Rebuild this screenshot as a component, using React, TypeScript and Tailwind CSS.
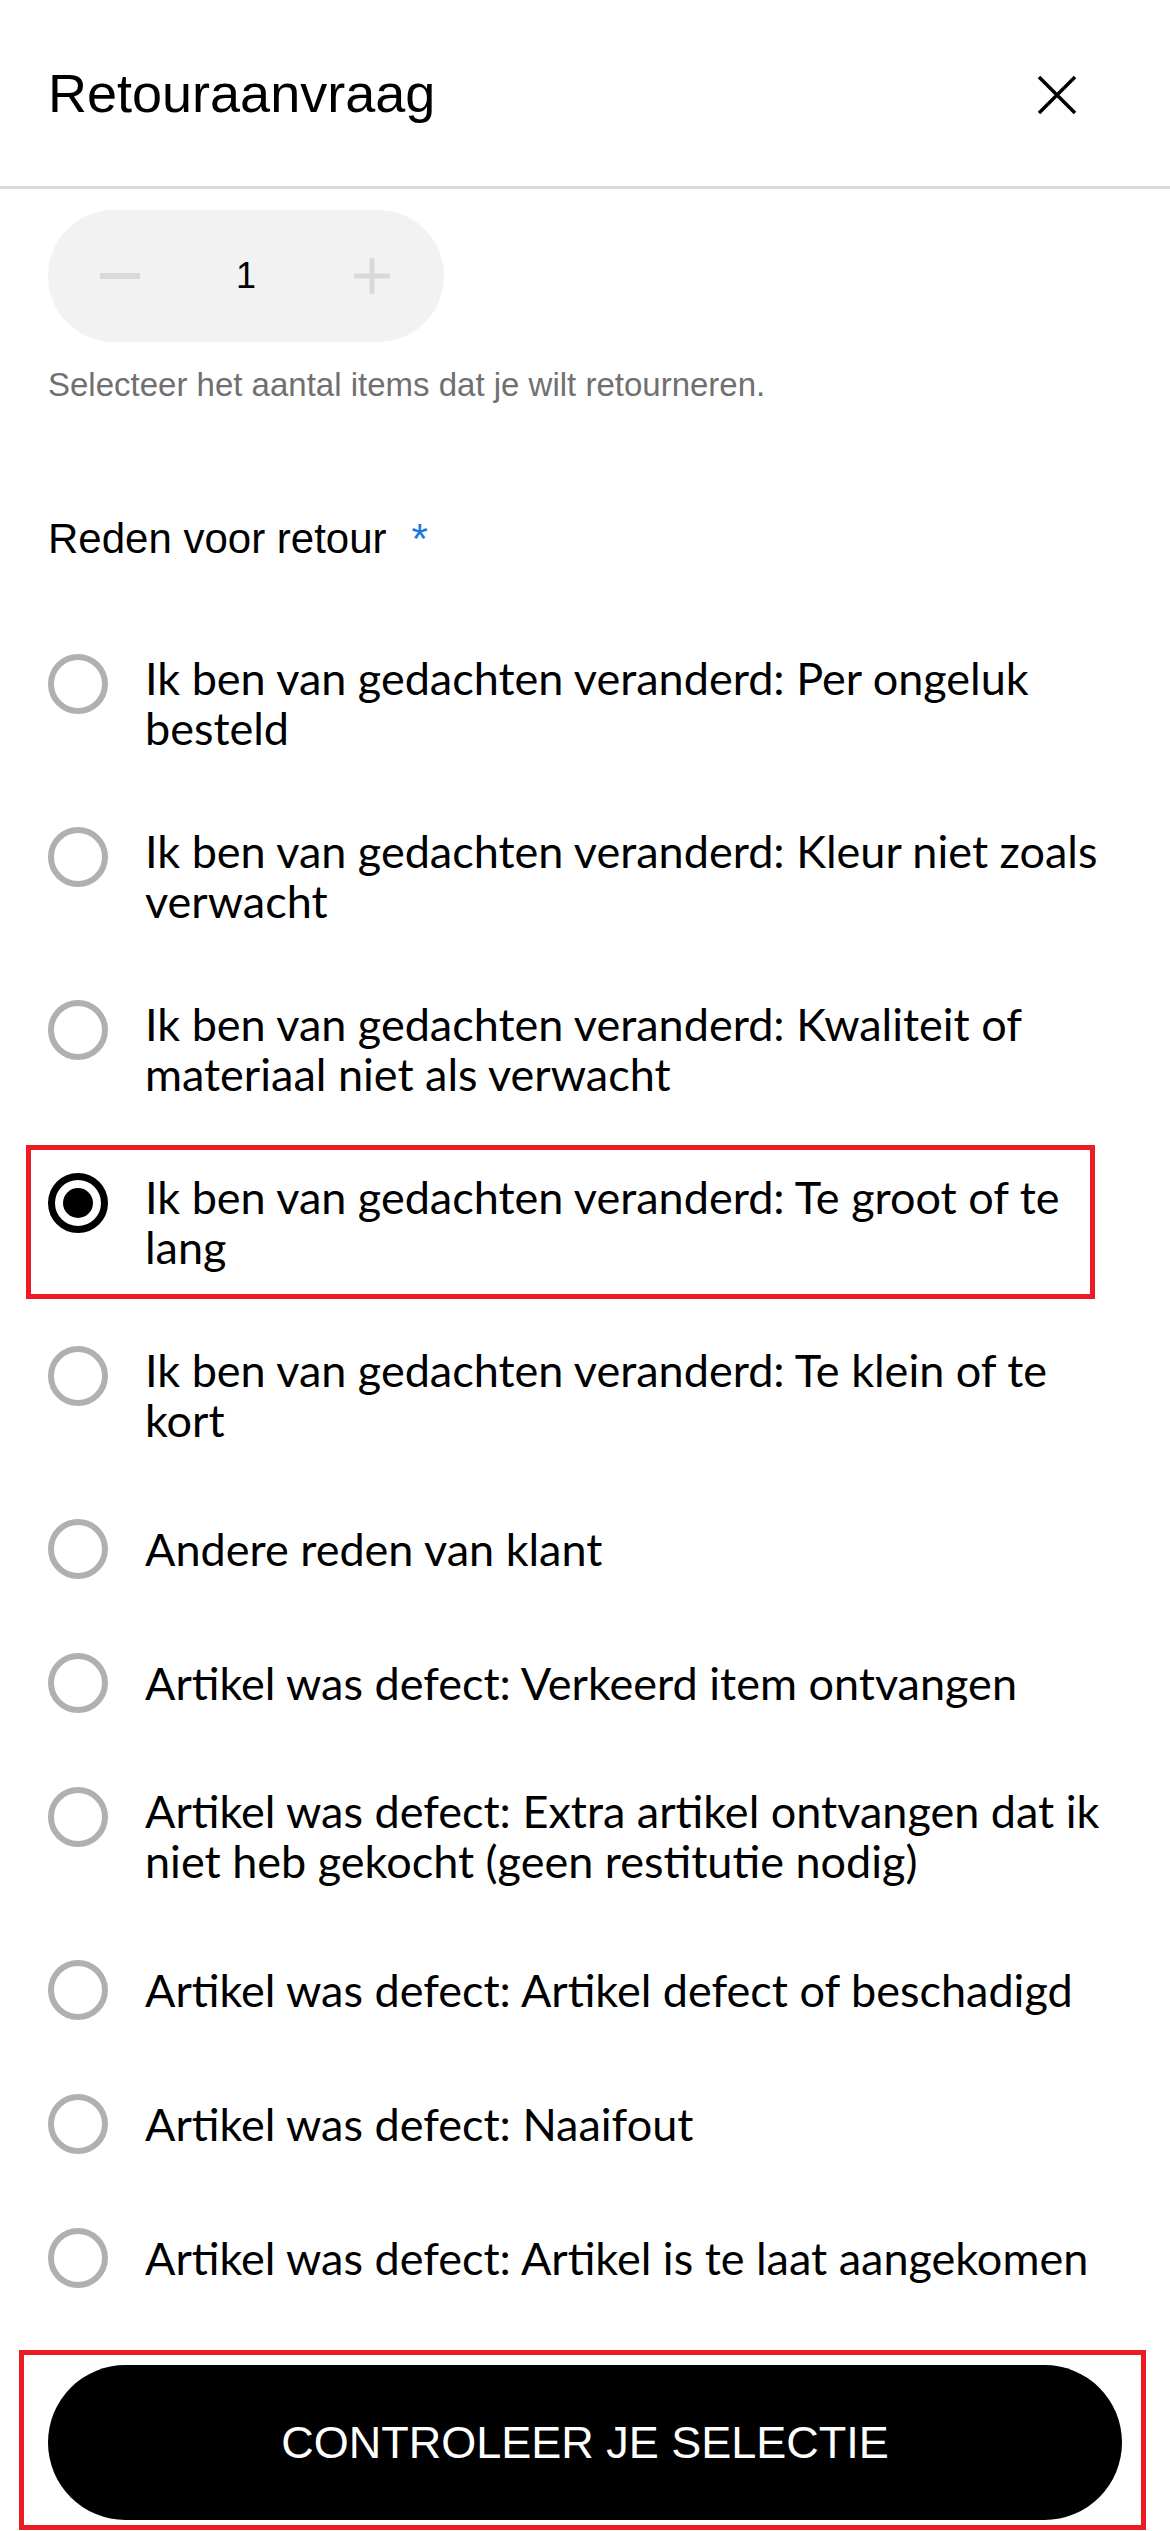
import React, { useState } from "react";

const reasons = [
  "Ik ben van gedachten veranderd: Per ongeluk besteld",
  "Ik ben van gedachten veranderd: Kleur niet zoals verwacht",
  "Ik ben van gedachten veranderd: Kwaliteit of materiaal niet als verwacht",
  "Ik ben van gedachten veranderd: Te groot of te lang",
  "Ik ben van gedachten veranderd: Te klein of te kort",
  "Andere reden van klant",
  "Artikel was defect: Verkeerd item ontvangen",
  "Artikel was defect: Extra artikel ontvangen dat ik niet heb gekocht (geen restitutie nodig)",
  "Artikel was defect: Artikel defect of beschadigd",
  "Artikel was defect: Naaifout",
  "Artikel was defect: Artikel is te laat aangekomen",
];

function Radio({ checked }: { checked: boolean }) {
  return (
    <span
      className={
        checked
          ? "w-[60px] h-[60px] shrink-0 rounded-full border-[7px] border-black flex items-center justify-center"
          : "w-[60px] h-[60px] shrink-0 rounded-full border-[6px] border-[#b0b0b0]"
      }
    >
      {checked && <span className="w-[30px] h-[30px] rounded-full bg-black" />}
    </span>
  );
}

export default function App() {
  const [selected, setSelected] = useState(3);
  const [qty] = useState(1);

  return (
    <div className="w-[1170px] min-h-[2531px] bg-white flex flex-col font-['Liberation_Sans',Arial,sans-serif] text-black">
      {/* header */}
      <div className="h-[189px] shrink-0 flex items-center justify-between pl-[48px] pr-[93px] border-b-[3px] border-[#d9d9d9]">
        <h1 className="text-[54px] leading-[62px] font-normal">Retouraanvraag</h1>
        <button className="w-[40px] h-[40px] mt-[4px]">
          <svg viewBox="0 0 40 40" className="w-[40px] h-[40px]">
            <path d="M2 2 L38 38 M38 2 L2 38" stroke="black" strokeWidth="3.5" fill="none" />
          </svg>
        </button>
      </div>

      {/* content */}
      <div className="px-[48px] pt-[21px]">
        <div className="w-[396px] h-[132px] rounded-full bg-[#f2f2f2] flex items-center">
          <button className="w-[144px] h-full flex items-center justify-center">
            <span className="block w-[40px] h-[6px] bg-[#d9d9d9]" />
          </button>
          <span className="flex-1 text-center text-[36px] leading-none">{qty}</span>
          <button className="w-[144px] h-full flex items-center justify-center">
            <svg viewBox="0 0 36 36" className="w-[36px] h-[36px]">
              <path d="M0 18 H36 M18 0 V36" stroke="#d9d9d9" strokeWidth="5" fill="none" />
            </svg>
          </button>
        </div>

        <p className="mt-[24px] text-[33px] leading-[38px] text-[#707070]">
          Selecteer het aantal items dat je wilt retourneren.
        </p>

        <div className="mt-[111px] text-[42px] leading-[48px] flex items-start">
          <span>Reden voor retour</span>
          <span className="ml-[25px] text-[#1677e5]">*</span>
        </div>

        <div className="mt-[91px] flex flex-col gap-[74px] font-['Lato','Noto_Sans',sans-serif]">
          {reasons.map((r, i) => (
            <label
              key={r}
              onClick={() => setSelected(i)}
              className="relative flex items-start cursor-pointer"
            >
              <Radio checked={selected === i} />
              <span className="self-center ml-[37px] -mt-[1px] text-[45px] leading-[50px]">{r}</span>
              {i === 3 && (
                <span className="absolute -left-[22px] right-[27px] -top-[28px] -bottom-[27px] border-[5px] border-[#ec1c24] pointer-events-none" />
              )}
            </label>
          ))}
        </div>
      </div>

      {/* footer */}
      <div className="mt-[77px] px-[48px] pb-[12px]">
        <div className="relative">
          <button className="w-full h-[155px] rounded-full bg-black text-white text-[45px] leading-none uppercase">
            Controleer je selectie
          </button>
          <span className="absolute -left-[29px] -right-[24px] -top-[15px] -bottom-[10px] border-[5px] border-[#ec1c24] pointer-events-none" />
        </div>
      </div>
    </div>
  );
}
